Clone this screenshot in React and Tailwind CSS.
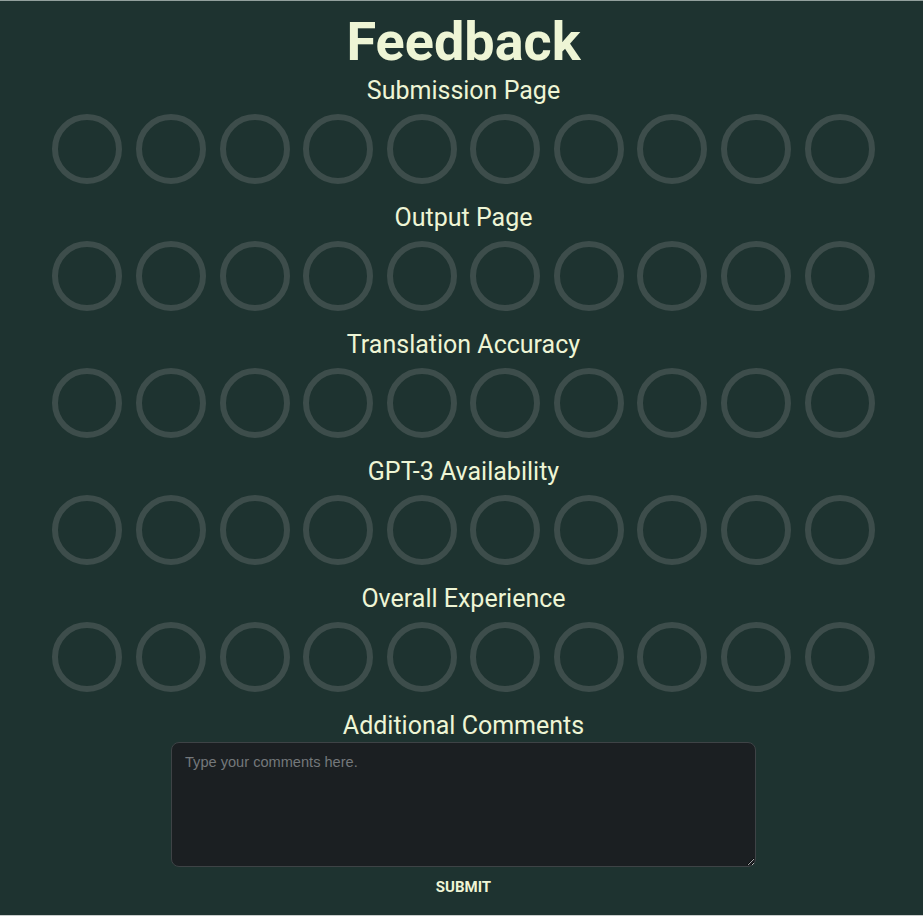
const sections = [
  "Submission Page",
  "Output Page",
  "Translation Accuracy",
  "GPT-3 Availability",
  "Overall Experience",
];

const RatingRow = ({ label }) => (
  <div className="flex flex-col items-center">
    <h2 className="pt-[2px] text-[25px] leading-[32px] text-[#eef5d5]">{label}</h2>
    <div className="mt-[7px] mb-[16px] flex gap-[13.6px]">
      {Array.from({ length: 10 }).map((_, i) => (
        <button
          key={i}
          className="h-[70px] w-[70px] rounded-full border-[6px] border-[#3d4d4b]"
        />
      ))}
    </div>
  </div>
);

export default function App() {
  return (
    <div
      className="min-h-[916px] border-t border-b border-t-[#93a09d] border-b-[#c9cdcc] bg-[#1e3330] pl-[4px]"
      style={{ fontFamily: "Roboto, 'Liberation Sans', sans-serif" }}
    >
      <div className="flex flex-col items-center pt-[14px]">
        <h1 className="mb-[4px] text-[54px] font-bold leading-[54px] text-[#eef5d5]">
          Feedback
        </h1>

        {sections.map((s) => (
          <RatingRow key={s} label={s} />
        ))}

        {/* Comments */}
        <h2 className="pt-[2px] text-[25px] leading-[32px] text-[#eef5d5]">Additional Comments</h2>
        <textarea
          placeholder="Type your comments here."
          className="h-[125px] w-[585px] rounded-[8px] border border-[#3e4346] bg-[#1b1f22] px-[13px] py-[9px] text-[14.6px] text-[#d0d4d6] placeholder:text-[#74787b] outline-none"
          style={{ fontFamily: "'Liberation Sans', Arial, sans-serif" }}
        />
        <button className="mt-[10px] text-[15px] font-bold leading-[20px] text-[#eef5d5]">
          SUBMIT
        </button>
      </div>
    </div>
  );
}
